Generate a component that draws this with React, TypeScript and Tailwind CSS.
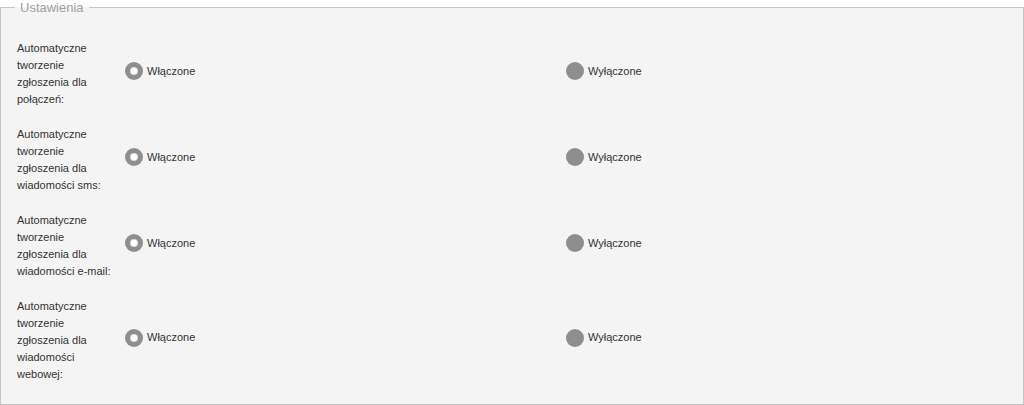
const rows = [
  ["Automatyczne", "tworzenie", "zgłoszenia dla", "połączeń:"],
  ["Automatyczne", "tworzenie", "zgłoszenia dla", "wiadomości sms:"],
  ["Automatyczne", "tworzenie", "zgłoszenia dla", "wiadomości e-mail:"],
  ["Automatyczne", "tworzenie", "zgłoszenia dla", "wiadomości", "webowej:"],
];

const Radio = ({ checked, label }: { checked: boolean; label: string }) => {
  return (
    <div className="flex items-center gap-[4px] pb-[6px]">
      <span className="flex h-[18px] w-[18px] items-center justify-center rounded-full bg-[#8e8e8e]">
        {checked && <span className="h-[6px] w-[6px] rounded-full bg-white ring-1 ring-[#e0e0e0]" />}
      </span>
      <span className="text-[11px] text-[#333]">{label}</span>
    </div>
  );
};

const App = () => {
  return (
    <div className="w-[1024px] h-[405px] bg-white" style={{ fontFamily: '"Liberation Sans", Arial, sans-serif' }}>
      <fieldset className="m-0 h-[405px] border border-[#c6c6c6] bg-[#f4f4f4] px-4 pt-4 pb-0">
        <legend className="ml-[-2px] px-[5px] text-[13px] leading-[15px] text-[#a0a0a0]">Ustawienia</legend>
        <div className="flex flex-col">
          {rows.map((lines, i) => (
            <div key={i} className="flex items-center py-[9px]">
              <div className="w-[108px] text-[11px] leading-[17px] text-[#333]">
                {lines.map((l, j) => (
                  <div key={j}>{l}</div>
                ))}
              </div>
              <div className="w-[441px]">
                <Radio checked label="Włączone" />
              </div>
              <div className="w-[441px]">
                <Radio checked={false} label="Wyłączone" />
              </div>
            </div>
          ))}
        </div>
      </fieldset>
    </div>
  );
};

export default App;
